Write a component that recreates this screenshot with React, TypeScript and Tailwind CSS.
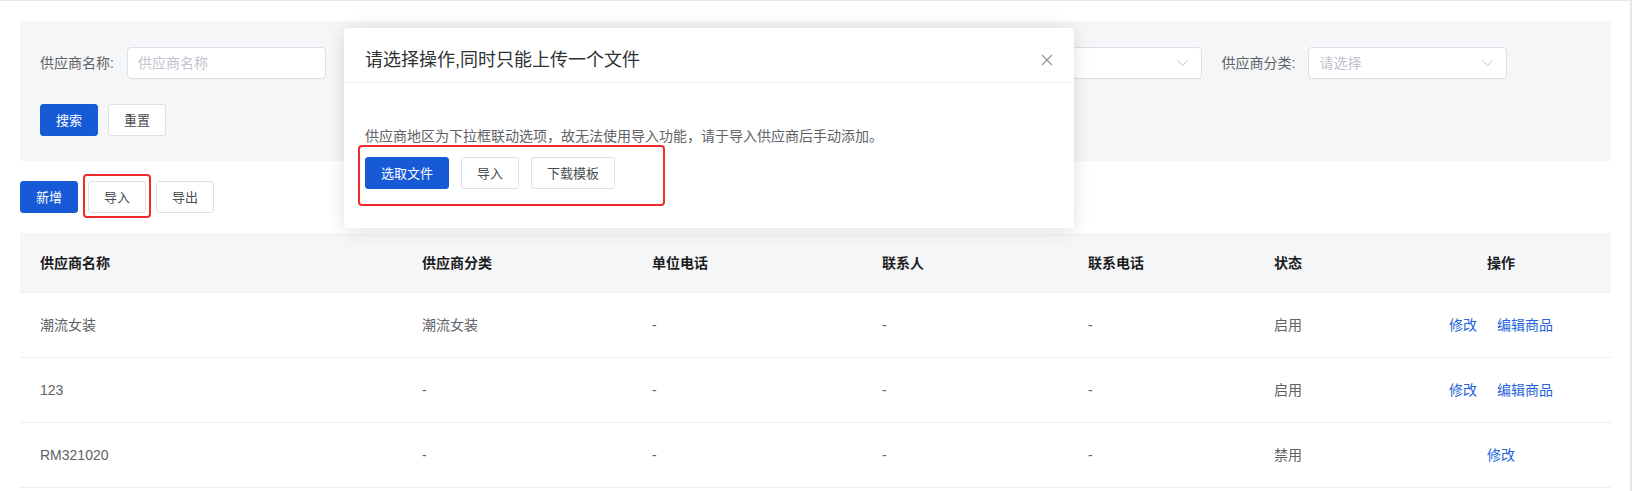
import React from 'react';

const FONT = '"Liberation Sans", "Noto Sans CJK SC", sans-serif';

interface Supplier {
  name: string;
  category: string;
  phone: string;
  contact: string;
  contactPhone: string;
  status: string;
  canEditGoods: boolean;
}

const suppliers: Supplier[] = [
  { name: '潮流女装', category: '潮流女装', phone: '-', contact: '-', contactPhone: '-', status: '启用', canEditGoods: true },
  { name: '123', category: '-', phone: '-', contact: '-', contactPhone: '-', status: '启用', canEditGoods: true },
  { name: 'RM321020', category: '-', phone: '-', contact: '-', contactPhone: '-', status: '禁用', canEditGoods: false },
];

const cols = 'grid grid-cols-[382px_230px_230px_206px_186px_137px_1fr]';

function Chevron() {
  return (
    <svg width="11" height="6" viewBox="0 0 11 6" fill="none">
      <polyline points="0.5,0.5 5.5,5.5 10.5,0.5" stroke="#c0c4cc" strokeWidth="1" />
    </svg>
  );
}

function Field({ label, placeholder, select }: { label: string; placeholder: string; select?: boolean }) {
  return (
    <div className="flex items-center">
      <span className="text-sm text-[#606266] whitespace-nowrap">{label}</span>
      <div className="ml-[13px] w-[199px] h-8 bg-white border border-[#dcdfe6] rounded flex items-center justify-between pl-[10px] pr-[13px]">
        <span className="text-sm text-[#c0c4cc]">{placeholder}</span>
        {select && <Chevron />}
      </div>
    </div>
  );
}

function Btn({ children, primary }: { children: React.ReactNode; primary?: boolean }) {
  return (
    <button
      className={`h-8 px-[15px] rounded-[3px] text-[13px] leading-none whitespace-nowrap ${
        primary
          ? 'bg-[#175ad6] border border-[#175ad6] text-white'
          : 'bg-white border border-[#dcdfe6] text-[#4a4d52]'
      }`}
    >
      {children}
    </button>
  );
}

export default function App() {
  return (
    <div
      className="relative w-[1632px] h-[491px] overflow-hidden bg-white border-t border-r-2 border-[#e6e8ec] pl-5 pr-[19px] pt-5"
      style={{ fontFamily: FONT }}
    >
      {/* Search panel */}
      <div className="bg-[#f5f6f8] h-[140px] px-5 pt-[26px]">
        <div className="flex items-center gap-5">
          <Field label="供应商名称:" placeholder="供应商名称" />
          <Field label="单位电话:" placeholder="单位电话" />
          <Field label="联系电话:" placeholder="联系电话" />
          <Field label="所属地区:" placeholder="请选择" select />
          <Field label="供应商分类:" placeholder="请选择" select />
        </div>
        <div className="flex gap-[10px] mt-[25px]">
          <Btn primary>搜索</Btn>
          <Btn>重置</Btn>
        </div>
      </div>

      {/* Toolbar */}
      <div className="flex gap-[10px] mt-5">
        <Btn primary>新增</Btn>
        <div className="relative">
          <Btn>导入</Btn>
          <div className="absolute -left-[5px] -right-[5px] -top-[7px] -bottom-[5px] border-2 border-[#f22a2a] rounded" />
        </div>
        <Btn>导出</Btn>
      </div>

      {/* Table */}
      <div className="mt-5 text-sm">
        <div className={`${cols} h-[60px] items-center bg-[#f5f6f8] border-b border-[#ebeef5] font-bold text-[#1d1d1f]`}>
          <div className="pl-5">供应商名称</div>
          <div className="pl-5">供应商分类</div>
          <div className="pl-5">单位电话</div>
          <div className="pl-5">联系人</div>
          <div className="pl-5">联系电话</div>
          <div className="pl-5">状态</div>
          <div className="text-center">操作</div>
        </div>
        {suppliers.map(s => (
          <div key={s.name} className={`${cols} h-[65px] items-center border-b border-[#ebeef5] text-[#606266]`}>
            <div className="pl-5">{s.name}</div>
            <div className="pl-5">{s.category}</div>
            <div className="pl-5">{s.phone}</div>
            <div className="pl-5">{s.contact}</div>
            <div className="pl-5">{s.contactPhone}</div>
            <div className="pl-5">{s.status}</div>
            <div className="flex justify-center gap-5 text-[#2464dd]">
              <span>修改</span>
              {s.canEditGoods && <span>编辑商品</span>}
            </div>
          </div>
        ))}
      </div>

      {/* Import dialog */}
      <div className="absolute left-[344px] top-[27px] w-[730px] h-[200px] bg-white rounded-sm shadow-[0_2px_18px_rgba(0,0,0,0.13)]">
        <div className="flex items-center justify-between pl-[21px] pr-[21px] pt-5 pb-[10px] border-b border-[#ebeef5]">
          <span className="text-[18px] leading-6 text-[#303133]">请选择操作,同时只能上传一个文件</span>
          <svg width="12" height="12" viewBox="0 0 12 12" fill="none">
            <path d="M1 1L11 11M11 1L1 11" stroke="#909399" strokeWidth="1.1" />
          </svg>
        </div>
        <div className="pl-[21px] pt-[43px]">
          <p className="text-sm leading-5 text-[#606266]">
            供应商地区为下拉框联动选项，故无法使用导入功能，请于导入供应商后手动添加。
          </p>
          <div className="relative inline-flex gap-3 mt-[11px]">
            <Btn primary>选取文件</Btn>
            <Btn>导入</Btn>
            <Btn>下载模板</Btn>
            <div className="absolute -left-[7px] -right-[50px] -top-[12px] -bottom-[17px] border-2 border-[#f22a2a] rounded" />
          </div>
        </div>
      </div>
    </div>
  );
}
